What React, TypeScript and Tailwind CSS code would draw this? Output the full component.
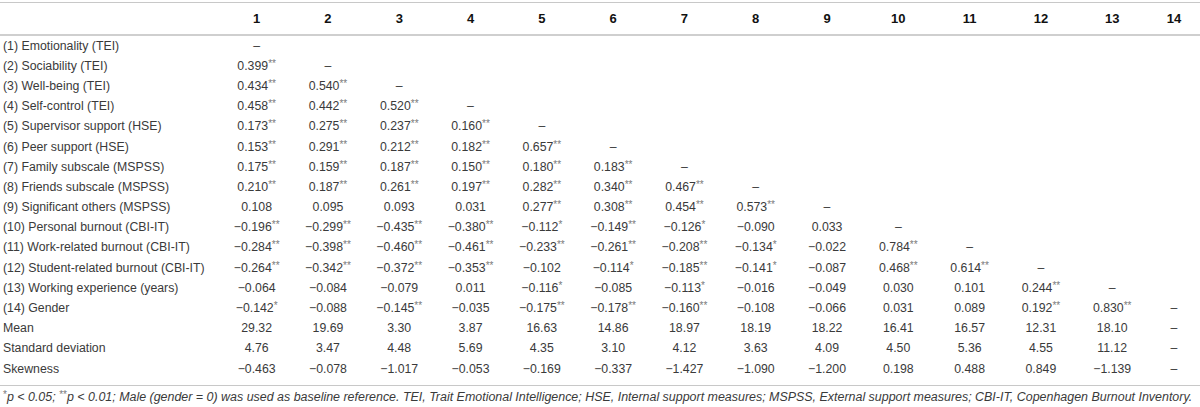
import React from 'react';

const M = '\u2212';
const D = '\u2013';

const labels = [
  '(1) Emotionality (TEI)',
  '(2) Sociability (TEI)',
  '(3) Well-being (TEI)',
  '(4) Self-control (TEI)',
  '(5) Supervisor support (HSE)',
  '(6) Peer support (HSE)',
  '(7) Family subscale (MSPSS)',
  '(8) Friends subscale (MSPSS)',
  '(9) Significant others (MSPSS)',
  '(10) Personal burnout (CBI-IT)',
  '(11) Work-related burnout (CBI-IT)',
  '(12) Student-related burnout (CBI-IT)',
  '(13) Working experience (years)',
  '(14) Gender',
  'Mean',
  'Standard deviation',
  'Skewness',
];

// "-" is written as a real minus when rendered
const raw = [
  '–',
  '0.399** –',
  '0.434** 0.540** –',
  '0.458** 0.442** 0.520** –',
  '0.173** 0.275** 0.237** 0.160** –',
  '0.153** 0.291** 0.212** 0.182** 0.657** –',
  '0.175** 0.159** 0.187** 0.150** 0.180** 0.183** –',
  '0.210** 0.187** 0.261** 0.197** 0.282** 0.340** 0.467** –',
  '0.108 0.095 0.093 0.031 0.277** 0.308** 0.454** 0.573** –',
  '-0.196** -0.299** -0.435** -0.380** -0.112* -0.149** -0.126* -0.090 0.033 –',
  '-0.284** -0.398** -0.460** -0.461** -0.233** -0.261** -0.208** -0.134* -0.022 0.784** –',
  '-0.264** -0.342** -0.372** -0.353** -0.102 -0.114* -0.185** -0.141* -0.087 0.468** 0.614** –',
  '-0.064 -0.084 -0.079 0.011 -0.116* -0.085 -0.113* -0.016 -0.049 0.030 0.101 0.244** –',
  '-0.142* -0.088 -0.145** -0.035 -0.175** -0.178** -0.160** -0.108 -0.066 0.031 0.089 0.192** 0.830** –',
  '29.32 19.69 3.30 3.87 16.63 14.86 18.97 18.19 18.22 16.41 16.57 12.31 18.10 –',
  '4.76 3.47 4.48 5.69 4.35 3.10 4.12 3.63 4.09 4.50 5.36 4.55 11.12 –',
  '-0.463 -0.078 -1.017 -0.053 -0.169 -0.337 -1.427 -1.090 -1.200 0.198 0.488 0.849 -1.139 –',
];

const rows = raw.map((r) => r.split(' '));
const cols = Array.from({ length: 14 }, (_, i) => i + 1);

const Stars = ({ s }: { s: string }) => (
  <sup className="not-italic leading-none text-[10px] text-[#7a7a7a] top-[-3px]">{s}</sup>
);

const Cell = ({ v }: { v?: string }) => {
  if (!v) return <td />;
  if (v === '–') return <td className="p-0 pt-[2px] text-center">{D}</td>;
  const num = v.replace(/\*/g, '').replace('-', M);
  const stars = v.replace(/[^*]/g, '');
  return (
    <td className="p-0 pt-[2px] text-center whitespace-nowrap">
      {num}
      {stars && <Stars s={stars} />}
    </td>
  );
};

export default function App() {
  return (
    <div
      className="w-[1200px] h-[407px] bg-white pt-[2px] text-[12.3px] text-[#3a3a3a]"
      style={{ fontFamily: '"Liberation Sans", Arial, sans-serif' }}
    >
      <table className="w-full table-fixed border-collapse">
        <colgroup>
          <col className="w-[221px]" />
          {cols.slice(0, 13).map((c) => (
            <col key={c} className="w-[71.3px]" />
          ))}
          <col />
        </colgroup>
        <thead>
          <tr className="h-[32px] border-t border-b-2 border-t-[#c8c8c8] border-b-[#cfcfcf]">
            <th />
            {cols.map((c) => (
              <th key={c} className="text-center font-bold text-[13px] text-[#111]">
                {c}
              </th>
            ))}
          </tr>
        </thead>
        <tbody className="leading-[16px]">
          {labels.map((label, i) => (
            <tr key={label} className="h-[20.2px]">
              <td className="p-0 pt-[2px] pl-[3px] whitespace-nowrap">{label}</td>
              {cols.map((c, j) => (
                <Cell key={c} v={rows[i][j]} />
              ))}
            </tr>
          ))}
          <tr className="h-[8px] border-b border-b-[#c8c8c8]">
            <td colSpan={15} />
          </tr>
        </tbody>
      </table>
      <p className="pl-[3px] pt-[4px] italic text-[12.45px] leading-[15px] whitespace-nowrap">
        <Stars s="*" />p &lt; 0.05; <Stars s="**" />p &lt; 0.01; Male (gender = 0) was used as baseline
        reference. TEI, Trait Emotional Intelligence; HSE, Internal support measures; MSPSS, External support
        measures; CBI-IT, Copenhagen Burnout Inventory.
      </p>
    </div>
  );
}
